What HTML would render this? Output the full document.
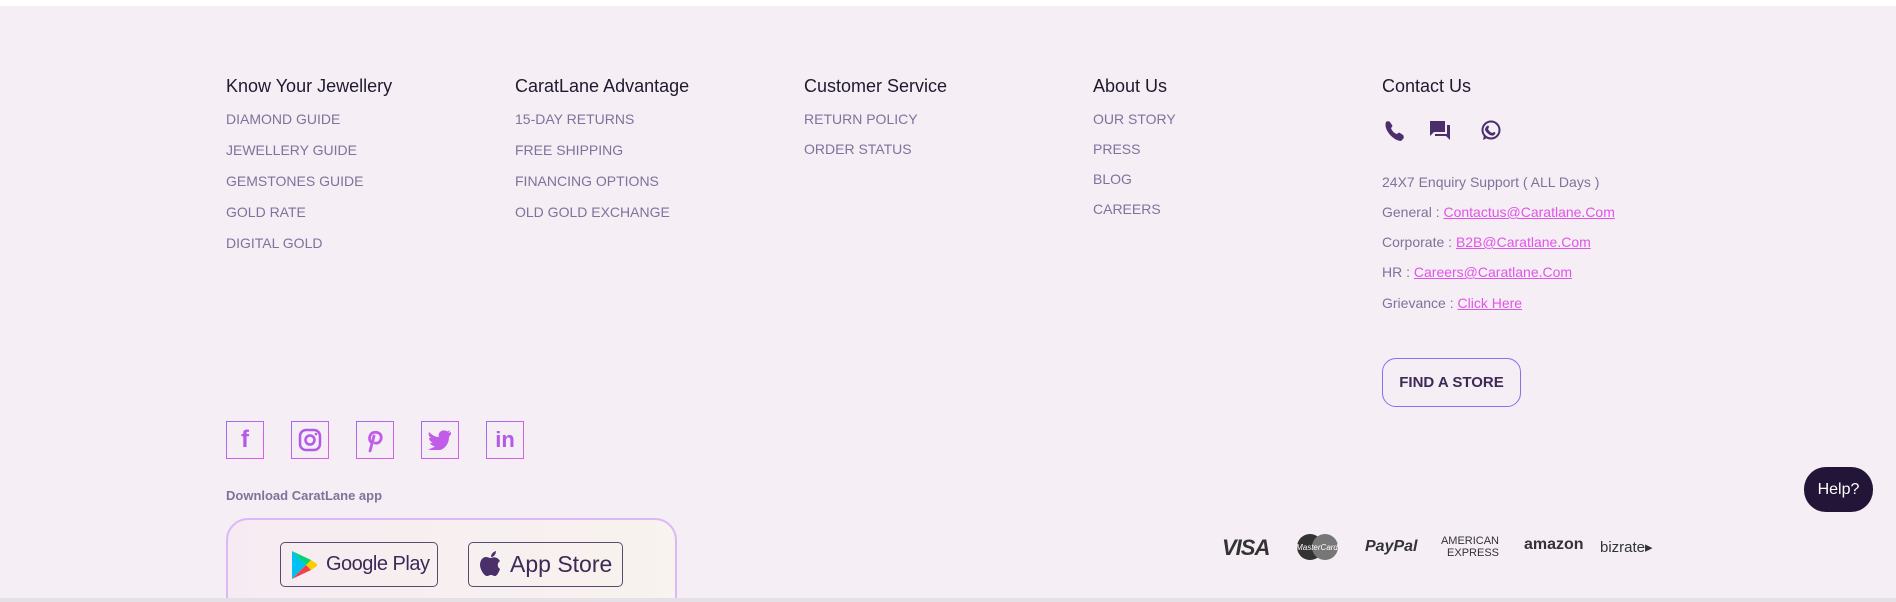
<!DOCTYPE html>
<html><head><meta charset="utf-8"><style>
*{margin:0;padding:0;box-sizing:border-box}
html,body{width:1896px;height:602px;overflow:hidden}
body{background:#f5eef5;font-family:"Liberation Sans",sans-serif;position:relative}
.top{position:absolute;left:0;top:0;width:1896px;height:6px;background:#fff}
.bot{position:absolute;left:0;top:598px;width:1896px;height:4px;background:#e4e0e6}
.col{position:absolute;top:74px}
.col h3{font-weight:normal;font-size:18px;color:#1f1a2e;height:24px;line-height:24px}
.col a{display:block;font-size:14px;color:#80729a;text-decoration:none;line-height:31px;height:31px;white-space:nowrap}
.col .first{margin-top:6px}
.col.ab a{line-height:30px;height:30px}
.ct{position:absolute;left:1382px;font-size:14px;color:#80729a;line-height:20px;white-space:nowrap}
.ct u{color:#e055e8}
.btn{position:absolute;left:1382px;top:358px;width:139px;height:49px;border:1px solid #8a6df0;border-radius:14px;font-size:15px;font-weight:bold;color:#3d2a56;text-align:center;line-height:47px}
.soc{position:absolute;top:421px;width:38px;height:38px;border:1.5px solid #c05ce8;border-image:linear-gradient(135deg,#9a6cf2,#e45ce6) 1;border-radius:3px;display:flex;align-items:center;justify-content:center}
.dl{position:absolute;left:226px;top:488px;font-size:13px;font-weight:bold;color:#80729a}
.app{position:absolute;left:226px;top:518px;width:451px;height:110px;border:2px solid #dcb8f7;border-radius:22px;background:linear-gradient(90deg,#f6ebf2,#f8f3ee)}
.sb{position:absolute;top:542px;height:45px;border:1.5px solid #5c4a6e;border-radius:5px;display:flex;align-items:center;gap:7px;color:#3d2a56;font-size:23px;padding-left:10px;white-space:nowrap}
.help{position:absolute;left:1804px;top:467px;width:69px;height:45px;border-radius:22px;background:#231537;color:#fff;font-size:16px;text-align:center;line-height:45px}
.pay{position:absolute;color:#333;font-weight:bold;white-space:nowrap}
</style></head><body>
<div class="top"></div>
<div class="col" style="left:226px"><h3>Know Your Jewellery</h3><a class="first">DIAMOND GUIDE</a><a>JEWELLERY GUIDE</a><a>GEMSTONES GUIDE</a><a>GOLD RATE</a><a>DIGITAL GOLD</a></div>
<div class="col" style="left:515px"><h3>CaratLane Advantage</h3><a class="first">15-DAY RETURNS</a><a>FREE SHIPPING</a><a>FINANCING OPTIONS</a><a>OLD GOLD EXCHANGE</a></div>
<div class="col ab" style="left:804px"><h3>Customer Service</h3><a class="first">RETURN POLICY</a><a>ORDER STATUS</a></div>
<div class="col ab" style="left:1093px"><h3>About Us</h3><a class="first">OUR STORY</a><a>PRESS</a><a>BLOG</a><a>CAREERS</a></div>
<div class="col" style="left:1382px"><h3>Contact Us</h3></div>
<svg style="position:absolute;left:1382px;top:120px" width="130" height="22" viewBox="0 0 130 22">
<path fill="#4a2f6b" d="M4 2c1-1 3-1 4 0l2 3c1 1 0 2-1 3 1 3 3 5 6 6 1-1 2-2 3-1l3 2c1 1 1 3 0 4l-2 2C12 21 1 10 4 2z"/>
<path fill="#4a2f6b" d="M48 1h15v11H52l-4 4z M65 5h3v15l-4-4H53v-2h12z"/>
<circle cx="109" cy="10" r="8.5" fill="none" stroke="#4a2f6b" stroke-width="2"/>
<path fill="#4a2f6b" d="M101 20l1-5 3 3z M105 6c1-1 2 0 2 1l-1 2c1 2 2 3 4 4l2-1c1 0 2 1 1 2-1 2-3 2-5 1-2-1-4-3-5-5 0-2 1-3 2-4z"/>
</svg>
<div class="ct" style="top:172px">24X7 Enquiry Support ( ALL Days )</div>
<div class="ct" style="top:202px">General : <u>Contactus@Caratlane.Com</u></div>
<div class="ct" style="top:232px">Corporate : <u>B2B@Caratlane.Com</u></div>
<div class="ct" style="top:262px">HR : <u>Careers@Caratlane.Com</u></div>
<div class="ct" style="top:293px">Grievance : <u>Click Here</u></div>
<div class="btn">FIND A STORE</div>
<div class="soc" style="left:226px"><span style="color:#b45ae8;font-weight:bold;font-size:24px">f</span></div>
<div class="soc" style="left:291px"><svg width="24" height="24"><rect x="2" y="2" width="20" height="20" rx="6" fill="none" stroke="#b45ae8" stroke-width="2.5"/><circle cx="12" cy="12" r="4.5" fill="none" stroke="#b45ae8" stroke-width="2.5"/><circle cx="18" cy="6" r="1.3" fill="#b45ae8"/></svg></div>
<div class="soc" style="left:356px"><svg width="20" height="26" viewBox="0 0 20 26"><path fill="none" stroke="#c05ce8" stroke-width="2.8" stroke-linecap="round" d="M6 15c-2-2-2-5 0-8 3-3 9-2 10 2s-2 8-6 7M9 9L5 24"/></svg></div>
<div class="soc" style="left:421px"><svg width="24" height="20" viewBox="0 0 24 20"><path fill="#c05ce8" d="M23 2c-1 .5-2 .7-3 .8 1-.7 2-1.6 2-2.6-1 .6-2 1-3 1.2C17 0 14 0 12 2c-1 1-2 3-1 5C7 7 4 5 1 2 0 4 1 7 3 8H1c0 2 2 4 4 5H2c1 2 3 3 5 3-2 2-5 3-7 3 9 5 21 0 21-12l2-3z"/></svg></div>
<div class="soc" style="left:486px"><span style="color:#b45ae8;font-weight:bold;font-size:22px">in</span></div>
<div class="dl">Download CaratLane app</div>
<div class="app"></div>
<div class="sb" style="left:280px;width:158px"><svg width="28" height="30" viewBox="0 0 28 30"><path fill="#00c2f0" d="M1 1l14 14L1 29z"/><path fill="#ffcc00" d="M15 15l5-5 6 4v2l-6 4z"/><path fill="#00d474" d="M1 1l19 9-5 5z"/><path fill="#f2404a" d="M1 29l14-14 5 5z"/></svg><span style="font-size:20px;letter-spacing:-0.5px">Google Play</span></div>
<div class="sb" style="left:468px;width:155px"><svg width="24" height="28" viewBox="0 0 24 28"><path fill="#4a2f6b" d="M12 7c2-1 4-1 6 0 1 .5 2 1.5 3 3-3 2-3 6 0 8-1 3-3 7-5 7-2 0-2-1-4-1s-2 1-4 1C5 25 1 18 1 14c0-5 3-8 6-8 2 0 3 1 5 1zM12 6c0-3 2-5 5-6 0 3-2 6-5 6z"/></svg><span>App Store</span></div>
<div class="pay" style="left:1222px;top:535px;font-size:22px;font-style:italic;letter-spacing:-1px">VISA</div>
<svg style="position:absolute;left:1296px;top:533px" width="44" height="28"><circle cx="14" cy="14" r="13" fill="#333"/><circle cx="29" cy="14" r="13" fill="#777"/><text x="21" y="17" font-size="8" fill="#fff" text-anchor="middle" font-family="Liberation Sans" font-style="italic">MasterCard</text></svg>
<div class="pay" style="left:1365px;font-size:16px;font-style:italic;top:538px">PayPal</div>
<div class="pay" style="left:1439px;font-size:11px;top:535px;line-height:12px;text-align:right;font-weight:normal;width:60px">AMERICAN<br>EXPRESS</div>
<div class="pay" style="left:1524px;font-size:16px;top:536px">amazon</div>
<div class="pay" style="left:1600px;font-size:15px;top:538px;font-weight:normal">bizrate▸</div>
<div class="help">Help?</div>
<div class="bot"></div>
</body></html>
